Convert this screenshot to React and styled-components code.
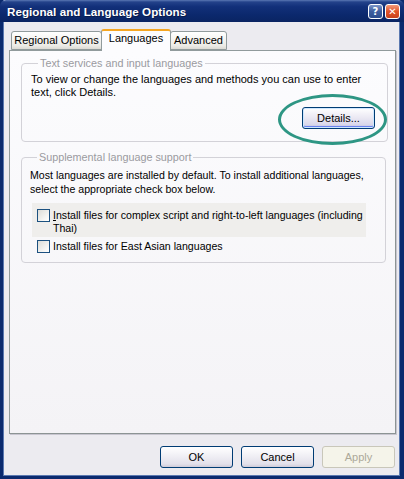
import styled, { createGlobalStyle } from "styled-components";

const GlobalStyle = createGlobalStyle`
  html, body {
    margin: 0;
    padding: 0;
    background: #ecebf0;
  }
  body {
    font-family: "Liberation Sans", Arial, sans-serif;
    font-size: 11px;
    color: #000;
  }
`;

const Window = styled.div`
  width: 404px;
  height: 479px;
  box-sizing: border-box;
  display: flex;
  flex-direction: column;
  background: #ecebf0;
  border: 3px solid #0b2a6e;
  border-top: 0;
  border-right-width: 4px;
  box-shadow: inset 1px 0 0 #5a78b0, inset -1px 0 0 #5a78b0, inset 0 -1px 0 #5a78b0;
`;

const TitleBar = styled.div`
  height: 22px;
  margin: 0 -4px 0 -3px;
  padding: 0 4px 0 7px;
  display: flex;
  align-items: center;
  background: linear-gradient(
    to bottom,
    #5b78b4 0,
    #23428a 2px,
    #12307a 30%,
    #0b286c 70%,
    #0a2462 100%
  );
  border-radius: 6px 6px 0 0;
`;

const Title = styled.div`
  flex: 1;
  color: #fff;
  font-weight: bold;
  font-size: 11.6px;
  letter-spacing: 0.05px;
  text-shadow: 1px 1px 0 #0a1a48;
`;

const CaptionButton = styled.div`
  width: 15px;
  height: 15px;
  margin-left: 2px;
  box-sizing: border-box;
  border: 1px solid #fff;
  border-radius: 3px;
  display: flex;
  align-items: center;
  justify-content: center;
  color: #fff;
  font-family: "DejaVu Sans", sans-serif;
  font-weight: bold;
  font-size: 10px;
  background: ${(p) =>
    p.close
      ? "linear-gradient(to bottom, #f39a7a, #e0542a 50%, #c8421c)"
      : "linear-gradient(to bottom, #7d96c8, #3d5d9e 50%, #2c4c8e)"};
`;

const Body = styled.div`
  flex: 1;
  display: flex;
  flex-direction: column;
  padding: 7px 4px 0 6px;
`;

const TabStrip = styled.div`
  display: flex;
  align-items: flex-end;
  padding-left: 2px;
  height: 21px;
  position: relative;
  z-index: 1;
`;

const Tab = styled.div`
  box-sizing: border-box;
  width: ${(p) => p.w}px;
  height: ${(p) => (p.active ? "22px" : "19px")};
  margin-bottom: ${(p) => (p.active ? "-1px" : "0")};
  padding-top: ${(p) => (p.active ? "1px" : "2px")};
  margin-left: ${(p) => (p.active ? "-1px" : "0")};
  margin-right: ${(p) => (p.active ? "-1px" : "0")};
  border: 1px solid #919b9c;
  border-bottom: ${(p) => (p.active ? "0" : "1px solid #919b9c")};
  border-top: ${(p) => (p.active ? "2px solid #f5a623" : "1px solid #919b9c")};
  border-radius: 3px 3px 0 0;
  background: ${(p) =>
    p.active ? "#fcfcfe" : "linear-gradient(to bottom, #fff, #ecebe6 80%, #dcdad4)"};
  display: flex;
  align-items: flex-start;
  justify-content: center;
  white-space: nowrap;
  font-size: 11px;
  position: relative;
  z-index: ${(p) => (p.active ? 2 : 1)};
`;

const Panel = styled.div`
  height: 384px;
  box-sizing: border-box;
  border: 1px solid #919b9c;
  border-right-color: #8c9494;
  border-bottom-color: #8c9494;
  box-shadow: 1px 1px 0 #c8c6d0;
  background: linear-gradient(to bottom, #fcfcfe, #f4f3f6);
  padding: 6px 7px 0 11px;
  display: flex;
  flex-direction: column;
  gap: 9px;
`;

const Group = styled.fieldset`
  margin: 0;
  margin-right: ${(p) => p.mr || 0}px;
  border: 1px solid #d3d2d8;
  border-radius: 4px;
  padding: ${(p) => p.pad || "3px 12px 12px 9px"};
  position: relative;
  min-width: 0;

  legend {
    color: #9a9aa0;
    font-size: 10.8px;
    line-height: 13px;
    padding: 0 2px;
    margin-left: 7px;
  }
`;

const Para = styled.p`
  margin: 0;
  font-size: ${(p) => p.fs || "11px"};
  white-space: nowrap;
  line-height: ${(p) => p.lh || "13px"};
`;

const ButtonRow = styled.div`
  display: flex;
  justify-content: flex-end;
  margin-top: 8px;
`;

const Button = styled.button`
  width: 73px;
  height: 22px;
  box-sizing: border-box;
  padding: 0;
  font-family: inherit;
  font-size: 11px;
  border: 1px solid ${(p) => (p.disabled ? "#c9c7ba" : "#003c74")};
  border-radius: 3px;
  color: ${(p) => (p.disabled ? "#aca899" : "#000")};
  background: ${(p) =>
    p.disabled
      ? "#f5f4ea"
      : p.focus
      ? "linear-gradient(to bottom, #ffffff, #eceaf4 45%, #d8d6ea 85%, #a6aad8)"
      : "linear-gradient(to bottom, #ffffff, #f2f1f6 40%, #e2e0ea 85%, #cfcbd8)"};
  box-shadow: ${(p) =>
    p.focus ? "inset 0 0 0 1px #cee7ff, inset 0 -2px 0 #6982ee" : "none"};
`;

const Highlight = styled.div`
  position: absolute;
  left: 256px;
  top: 24px;
  width: 103px;
  height: 45px;
  border: 3.5px solid #2e9684;
  border-radius: 50%;
  filter: blur(0.4px);
  pointer-events: none;
`;

const CheckRow = styled.label`
  display: flex;
  align-items: flex-start;
  gap: 3px;
  width: 334px;
  box-sizing: border-box;
  margin-left: 2px;
  padding: ${(p) => (p.shaded ? "6px 4px 2px 5px" : "3px 4px 0 5px")};
  background: ${(p) => (p.shaded ? "#efeeec" : "transparent")};
  font-size: 10.6px;
  line-height: 13px;
  white-space: nowrap;
`;

const Box = styled.span`
  flex: none;
  width: 13px;
  height: 13px;
  box-sizing: border-box;
  border: 1px solid #1c5180;
  background: linear-gradient(135deg, #dcdcd7, #f6f6f4 70%, #fff);
`;

const Footer = styled.div`
  height: 42px;
  display: flex;
  justify-content: flex-end;
  align-items: flex-start;
  gap: 8px;
  padding: 12px 1px 0 0;
  box-sizing: border-box;
`;

export default function App() {
  return (
    <>
      <GlobalStyle />
      <Window>
        <TitleBar>
          <Title>Regional and Language Options</Title>
          <CaptionButton>?</CaptionButton>
          <CaptionButton close>✕</CaptionButton>
        </TitleBar>
        <Body>
          <TabStrip>
            <Tab w={91}>Regional Options</Tab>
            <Tab active w={70}>Languages</Tab>
            <Tab w={57}>Advanced</Tab>
          </TabStrip>
          <Panel>
            <Group>
              <legend>Text services and input languages</legend>
              <Para>
                To view or change the languages and methods you can use to enter
                <br />
                text, click Details.
              </Para>
              <ButtonRow>
                <Button focus>Details...</Button>
              </ButtonRow>
              <Highlight />
            </Group>
            <Group pad="4px 14px 9px 8px" mr={2}>
              <legend>Supplemental language support</legend>
              <Para lh="14px" fs="10.6px">
                Most languages are installed by default. To install additional languages,
                <br />
                select the appropriate check box below.
              </Para>
              <div style={{ height: 7 }} />
              <CheckRow shaded>
                <Box />
                <span>
                  <u>I</u>nstall files for complex script and right-to-left languages (including
                  <br />
                  Thai)
                </span>
              </CheckRow>
              <CheckRow>
                <Box />
                <span>Install files for East Asian languages</span>
              </CheckRow>
            </Group>
          </Panel>
          <Footer>
            <Button>OK</Button>
            <Button>Cancel</Button>
            <Button disabled>Apply</Button>
          </Footer>
        </Body>
      </Window>
    </>
  );
}
